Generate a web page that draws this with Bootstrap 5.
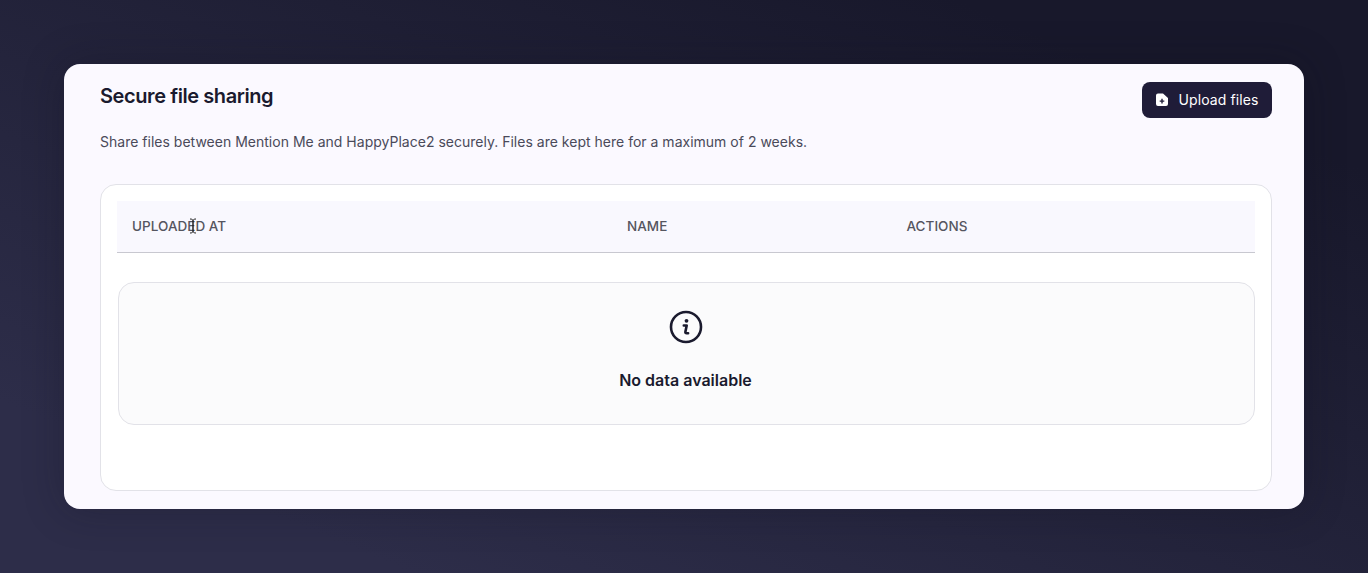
<!DOCTYPE html>
<html lang="en">
<head>
    <meta charset="UTF-8">
    <meta name="viewport" content="width=device-width, initial-scale=1.0">
    <title>Secure file sharing</title>
    <link href="https://cdn.jsdelivr.net/npm/bootstrap@5.3.0/dist/css/bootstrap.min.css" rel="stylesheet">
    <script src="https://cdn.jsdelivr.net/npm/bootstrap@5.3.0/dist/js/bootstrap.bundle.min.js"></script>
    <style>
        html, body { height: 100%; }
        body {
            font-family: Inter, "Liberation Sans", sans-serif;
            background: linear-gradient(to bottom left, #18182b 15%, #2d2d49 85%);
            padding: 64px 64px 0;
            overflow: hidden;
            color: #1a1a2e;
        }
        .share-panel {
            background: #fbf9ff;
            border-radius: 16px;
            height: 445px;
            padding: 18px 32px 18px 36px;
            box-shadow: 0 0 40px rgba(15, 15, 30, .3);
        }
        .share-head { height: 102px; }
        .share-title { font-size: 20px; font-weight: 600; line-height: 28px; margin: 0 0 22px; letter-spacing: -.42px; }
        .share-sub { font-size: 14px; line-height: 20px; color: #4a4a5a; margin: 0; letter-spacing: .01px; }
        .upload-btn {
            background: #1f1c38;
            color: #fff;
            border: 0;
            border-radius: 8px;
            height: 36px;
            width: 130px;
            font-size: 14px;
            font-weight: 400;
            gap: 11px;
        }
        .upload-btn:hover { background: #1f1c38; color: #fff; }
        .upload-btn > * { position: relative; top: -1px; }
        .upload-label { letter-spacing: .1px; }
        .table-box {
            background: #fff;
            border: 1px solid #e2e2e8;
            border-radius: 16px;
            height: 307px;
            padding: 16px;
        }
        .head-row {
            background: #f9f8fe;
            border-bottom: 1px solid #c8c8d0;
            height: 52px;
            font-size: 13.5px;
            font-weight: 500;
            color: #55555f;
            letter-spacing: .03px;
            position: relative;
        }
        .head-cell { padding-left: 15px; }
        .cell-date { width: 495px; }
        .cell-name { width: 279.500px; }
        .empty-box {
            background: #fbfbfc;
            border: 1px solid #e2e2e8;
            border-radius: 16px;
            height: 143px;
            margin: 29px 0 0 1px;
            padding-top: 27px;
        }
        .empty-text { font-size: 16px; font-weight: 600; line-height: 24px; margin: 24px 2px 0 0; }
        .text-cursor { position: absolute; left: 72px; top: 17px; }
        .info-icon { margin-left: -2px; }
    </style>
</head>
<body>
    <div class="share-panel">
        <div class="share-head d-flex justify-content-between align-items-start">
            <div>
                <h1 class="share-title">Secure file sharing</h1>
                <p class="share-sub">Share files between Mention Me and HappyPlace2 securely. Files are kept here for a maximum of 2 weeks.</p>
            </div>
            <button type="button" class="btn upload-btn d-flex align-items-center justify-content-center p-0">
                <svg width="12" height="13" viewBox="0 0 12 13" aria-hidden="true">
                    <path fill="#fff" fill-rule="evenodd" d="M2 .5h5L12 5v6a2 2 0 0 1-2 2H2a2 2 0 0 1-2-2V2.500a2 2 0 0 1 2-2z"/>
                    <path stroke="#1f1c38" stroke-width="1.4" d="M6 5.800v4.600M3.700 8.100h4.600"/>
                </svg>
                <span class="upload-label">Upload files</span>
            </button>
        </div>
        <div class="table-box">
            <div class="head-row d-flex align-items-center">
                <div class="head-cell cell-date">UPLOADED AT</div>
                <div class="head-cell cell-name">NAME</div>
                <div class="head-cell">ACTIONS</div>
                <svg class="text-cursor" width="8" height="16" viewBox="0 0 8 16" aria-hidden="true">
                    <path fill="none" stroke="#222" stroke-width="1" d="M1 1c2 0 3 .5 3 2v10c0 1.500-1 2-3 2M7 1c-2 0-3 .5-3 2v10c0 1.500 1 2 3 2"/>
                </svg>
            </div>
            <div class="empty-box d-flex flex-column align-items-center">
                <svg class="info-icon" width="34" height="34" viewBox="0 0 34 34" aria-hidden="true">
                    <circle cx="17" cy="17" r="15" fill="none" stroke="#1a1a2e" stroke-width="2.600"/>
                    <circle cx="17.500" cy="10.800" r="1.900" fill="#1a1a2e"/>
                    <path fill="none" stroke="#1a1a2e" stroke-width="2.600" stroke-linecap="round" stroke-linejoin="round" d="M14.800 15.500h2.900l-1.300 6.300c-.2 1 .3 1.500 1.200 1.500h1.500"/>
                </svg>
                <div class="empty-text">No data available</div>
            </div>
        </div>
    </div>
</body>
</html>
